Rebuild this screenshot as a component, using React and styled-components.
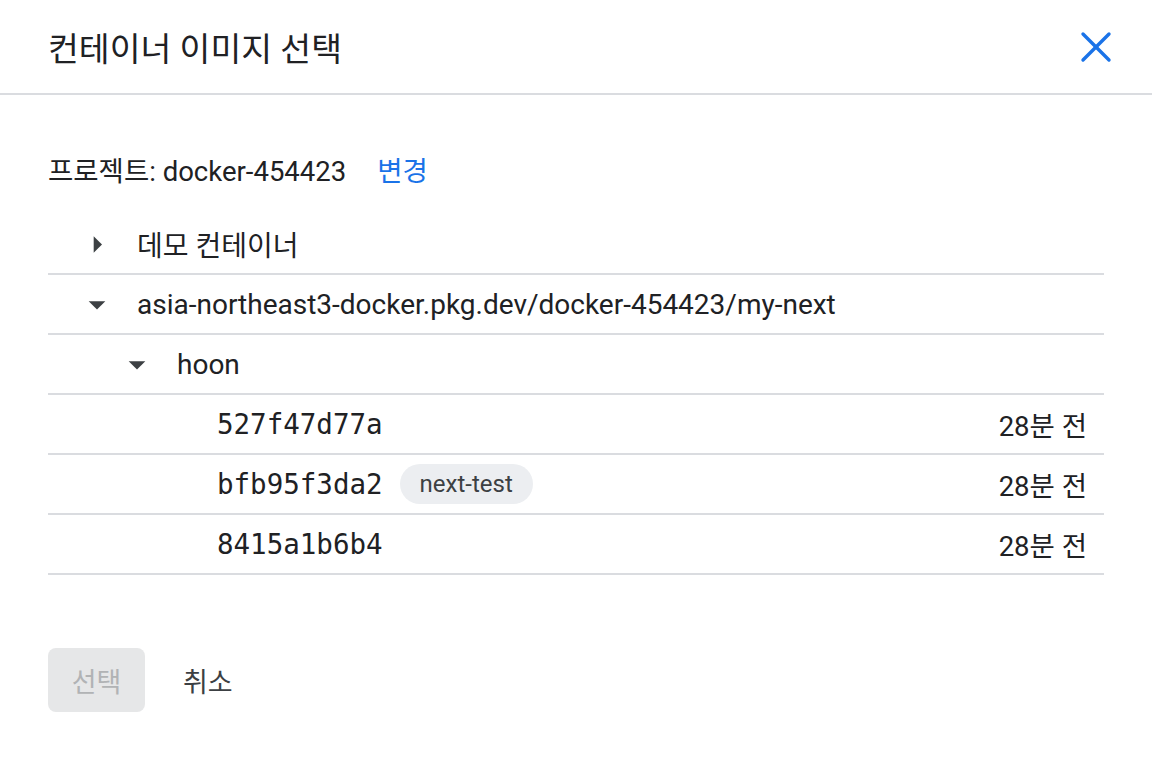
import React from 'react';
import styled, { createGlobalStyle } from 'styled-components';

const GlobalStyle = createGlobalStyle`
  html, body {
    margin: 0;
    padding: 0;
    background: #ffffff;
  }
  body {
    font-family: Roboto, "Noto Sans CJK KR", sans-serif;
    color: #202124;
  }
`;

const Dialog = styled.div`
  width: 1152px;
  min-height: 776px;
  background: #ffffff;
  display: flex;
  flex-direction: column;
`;

const Header = styled.div`
  height: 93px;
  padding: 0 32px 0 48px;
  display: flex;
  align-items: center;
  justify-content: space-between;
  border-bottom: 2px solid #dadce0;
`;

const Title = styled.h1`
  margin: 0;
  font-size: 33.5px;
  font-weight: 400;
  color: #202124;
`;

const CloseButton = styled.button`
  width: 48px;
  height: 48px;
  border: none;
  background: transparent;
  padding: 0;
  display: flex;
  align-items: center;
  justify-content: center;
  cursor: pointer;
`;

const Body = styled.div`
  padding: 54px 48px 0 48px;
`;

const ProjectLine = styled.div`
  display: flex;
  align-items: center;
  gap: 31px;
  font-size: 27.5px;
  height: 40px;
`;

const ChangeLink = styled.a`
  color: #1a73e8;
  text-decoration: none;
  cursor: pointer;
`;

const Tree = styled.div`
  margin-top: 26px;
  display: flex;
  flex-direction: column;
`;

const Row = styled.div`
  height: 58px;
  display: flex;
  align-items: center;
  padding-left: ${p => 29 + p.level * 40}px;
  padding-right: 17px;
  border-bottom: 2px solid #dadce0;
`;

const Toggle = styled.span`
  width: 40px;
  height: 40px;
  margin-right: 20px;
  display: flex;
  align-items: center;
  justify-content: center;
  flex-shrink: 0;
`;

const Label = styled.span`
  color: #202124;
  font-family: ${p => (p.mono ? '"DejaVu Sans Mono", "Liberation Mono", monospace' : 'Roboto, "Noto Sans CJK KR", sans-serif')};
  font-size: ${p => (p.mono ? '27.5px' : '28px')};
`;

const Chip = styled.span`
  margin-left: 17px;
  height: 40px;
  padding: 0 20px;
  border-radius: 20px;
  background: #eceef1;
  display: inline-flex;
  align-items: center;
  font-size: 24px;
  color: #3c4043;
`;

const Time = styled.span`
  margin-left: auto;
  font-size: 27.5px;
  color: #202124;
`;

const Actions = styled.div`
  margin-top: 73px;
  display: flex;
  align-items: center;
  gap: 14px;
`;

const PrimaryButton = styled.button`
  width: 97px;
  height: 64px;
  border: none;
  border-radius: 8px;
  background: #e6e7e8;
  color: #b1b3b5;
  font-family: Roboto, "Noto Sans CJK KR", sans-serif;
  font-size: 27px;
`;

const TextButton = styled.button`
  height: 64px;
  padding: 0 24px;
  border: none;
  background: transparent;
  color: #3c4043;
  font-family: Roboto, "Noto Sans CJK KR", sans-serif;
  font-size: 27px;
  cursor: pointer;
`;

const Arrow = ({ open }) => (
  <svg width="55" height="55" viewBox="0 0 24 24" fill="#3c4043">
    {open ? <path d="M7 10l5 5 5-5z" /> : <path d="M10 17l5-5-5-5v10z" />}
  </svg>
);

const CloseIcon = () => (
  <svg width="32" height="32" viewBox="0 0 32 32" stroke="#1a73e8" strokeWidth="3.4" strokeLinecap="round">
    <line x1="3" y1="3" x2="29" y2="29" />
    <line x1="29" y1="3" x2="3" y2="29" />
  </svg>
);

const images = [
  { id: '527f47d77a', time: '28분 전' },
  { id: 'bfb95f3da2', tag: 'next-test', time: '28분 전' },
  { id: '8415a1b6b4', time: '28분 전' },
];

export default function App() {
  return (
    <>
      <GlobalStyle />
      <Dialog>
        <Header>
          <Title>컨테이너 이미지 선택</Title>
          <CloseButton aria-label="닫기">
            <CloseIcon />
          </CloseButton>
        </Header>
        <Body>
          <ProjectLine>
            <span>프로젝트: docker-454423</span>
            <ChangeLink>변경</ChangeLink>
          </ProjectLine>
          <Tree>
            <Row level={0}>
              <Toggle><Arrow /></Toggle>
              <Label>데모 컨테이너</Label>
            </Row>
            <Row level={0}>
              <Toggle><Arrow open /></Toggle>
              <Label>asia-northeast3-docker.pkg.dev/docker-454423/my-next</Label>
            </Row>
            <Row level={1}>
              <Toggle><Arrow open /></Toggle>
              <Label>hoon</Label>
            </Row>
            {images.map(img => (
              <Row key={img.id} level={2}>
                <Toggle />
                <Label mono>{img.id}</Label>
                {img.tag && <Chip>{img.tag}</Chip>}
                <Time>{img.time}</Time>
              </Row>
            ))}
          </Tree>
          <Actions>
            <PrimaryButton disabled>선택</PrimaryButton>
            <TextButton>취소</TextButton>
          </Actions>
        </Body>
      </Dialog>
    </>
  );
}
